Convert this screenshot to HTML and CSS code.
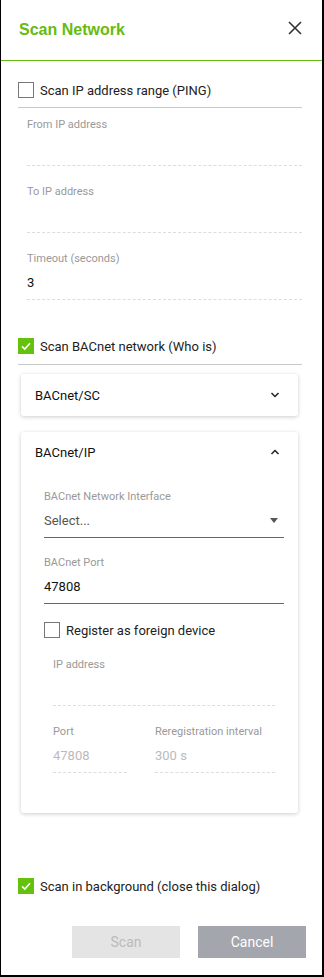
FILE: index.html
```html
<!DOCTYPE html>
<html>
<head>
<meta charset="utf-8">
<link rel="stylesheet" href="styles.css">
</head>
<body>
<div class="dialog">
  <div class="header">
    <div class="title">Scan Network</div>
    <svg class="close" width="14" height="14" viewBox="0 0 14 14"><path d="M1 1L13 13M13 1L1 13" stroke="#333" stroke-width="1.6" fill="none"/></svg>
  </div>
  <div class="body">
    <label class="check-row">
      <span class="box"></span>
      <span class="check-text">Scan IP address range (PING)</span>
    </label>
    <div class="rule"></div>
    <div class="group">
      <div class="field dashed">
        <div class="flabel">From IP address</div>
        <div class="fvalue"></div>
      </div>
      <div class="field dashed">
        <div class="flabel">To IP address</div>
        <div class="fvalue"></div>
      </div>
      <div class="field dashed">
        <div class="flabel">Timeout (seconds)</div>
        <div class="fvalue">3</div>
      </div>
    </div>

    <label class="check-row bac">
      <span class="box checked"><svg width="16" height="16" viewBox="0 0 16 16"><path d="M4 8.3L6.8 11L12 5.2" stroke="#fff" stroke-width="1.6" fill="none"/></svg></span>
      <span class="check-text">Scan BACnet network (Who is)</span>
    </label>
    <div class="rule rule2"></div>

    <div class="card sc">
      <div class="card-head">
        <span>BACnet/SC</span>
        <svg width="10" height="6" viewBox="0 0 10 6"><path d="M1.5 1L5 4.5L8.5 1" stroke="#222" stroke-width="1.5" fill="none"/></svg>
      </div>
    </div>

    <div class="card ip">
      <div class="card-head">
        <span>BACnet/IP</span>
        <svg width="10" height="6" viewBox="0 0 10 6"><path d="M1.5 5L5 1.5L8.5 5" stroke="#222" stroke-width="1.5" fill="none"/></svg>
      </div>
      <div class="card-body">
        <div class="field solid">
          <div class="flabel">BACnet Network Interface</div>
          <div class="fvalue select"><span class="placeholder">Select...</span><span class="caret"></span></div>
        </div>
        <div class="field solid">
          <div class="flabel">BACnet Port</div>
          <div class="fvalue">47808</div>
        </div>
        <label class="check-row foreign">
          <span class="box"></span>
          <span class="check-text">Register as foreign device</span>
        </label>
        <div class="sub">
          <div class="field dashed">
            <div class="flabel">IP address</div>
            <div class="fvalue"></div>
          </div>
          <div class="pair">
            <div class="field dashed port">
              <div class="flabel">Port</div>
              <div class="fvalue disabled">47808</div>
            </div>
            <div class="field dashed interval">
              <div class="flabel">Reregistration interval</div>
              <div class="fvalue disabled">300 s</div>
            </div>
          </div>
        </div>
      </div>
    </div>

    <label class="check-row bg">
      <span class="box checked"><svg width="16" height="16" viewBox="0 0 16 16"><path d="M4 8.3L6.8 11L12 5.2" stroke="#fff" stroke-width="1.6" fill="none"/></svg></span>
      <span class="check-text">Scan in background (close this dialog)</span>
    </label>

    <div class="actions">
      <button class="btn scan">Scan</button>
      <button class="btn cancel">Cancel</button>
    </div>
  </div>
</div>
</body>
</html>
```
FILE: styles.css
```css
* { box-sizing: border-box; }
html, body { margin: 0; padding: 0; background: #fff; }
body {
  font-family: Roboto, "Liberation Sans", Arial, sans-serif;
  color: #222;
  width: 324px;
  height: 977px;
}
.dialog {
  width: 324px;
  height: 977px;
  border-left: 1px solid #000;
  border-right: 2px solid #000;
  border-bottom: 2px solid #000;
  display: flex;
  flex-direction: column;
}
.header {
  height: 61px;
  border-bottom: 1px solid #66bb11;
  display: flex;
  align-items: center;
  justify-content: space-between;
  padding: 0 20px 0 18px;
}
.title {
  font-family: "Liberation Sans", Arial, sans-serif;
  font-weight: bold;
  font-size: 16px;
  color: #66bb11;
  margin-top: -1px;
}
.close { margin-top: -4px; }
.body {
  padding: 15px 20px 0 17px;
  display: flex;
  flex-direction: column;
}
.check-row {
  display: flex;
  align-items: center;
  height: 28px;
  font-size: 13px;
  color: #222;
}
.box {
  width: 16px;
  height: 16px;
  border: 1px solid #777;
  flex: none;
  margin-right: 6px;
  display: flex;
}
.box.checked {
  background: #66c10c;
  border-color: #66c10c;
}
.box.checked svg { margin: -1px; }
.rule {
  height: 1px;
  background: #c8c8c8;
  margin-top: 3px;
}
.rule.rule2 { margin-top: 4px; }
.group { padding: 0 0 0 9px; }
.field { display: flex; flex-direction: column; }
.flabel {
  font-size: 11px;
  line-height: 14px;
  color: #999;
  margin-top: 10px;
}
.group .field + .field .flabel { margin-top: 19px; }
.fvalue {
  height: 34px;
  line-height: 33px;
  font-size: 13px;
  color: #111;
}
.field.dashed .fvalue { border-bottom: 1px dashed #ddd; }
.field.solid .fvalue { border-bottom: 1px solid #666; }
.fvalue.disabled { color: #bbb; }

.check-row.bac { margin-top: 32px; }

.card {
  background: #fff;
  border-radius: 3px;
  box-shadow: 0 1px 4px rgba(0,0,0,0.2);
  margin-left: 3px;
  margin-right: 4px;
}
.card.sc { margin-top: 9px; }
.card.ip { margin-top: 16px; }
.card-head {
  display: flex;
  align-items: center;
  justify-content: space-between;
  padding: 0 18px 0 14px;
  font-size: 13px;
  color: #111;
}
.card.sc .card-head { height: 42px; }
.card.ip .card-head { height: 40px; }
.card-body {
  padding: 8px 14px 40px 23px;
  display: flex;
  flex-direction: column;
}
.card-body .field.solid + .field.solid .flabel { margin-top: 18px; }
.select {
  display: flex;
  align-items: center;
  justify-content: space-between;
}
.placeholder { color: #555; }
.caret {
  width: 0; height: 0;
  border-left: 4.5px solid transparent;
  border-right: 4.5px solid transparent;
  border-top: 5px solid #555;
  margin-right: 6px;
}
.check-row.foreign { margin-top: 12px; }
.sub { padding: 0 9px; }
.sub .field .flabel { margin-top: 14px; }
.pair { display: flex; gap: 28px; }
.pair .field .flabel { margin-top: 19px; }
.port { width: 74px; }
.interval { flex: 1; }

.check-row.bg { margin-top: 59px; }
.actions {
  display: flex;
  justify-content: flex-end;
  gap: 18px;
  margin-top: 26px;
  margin-right: -4px;
}
.btn {
  width: 108px;
  height: 32px;
  border: none;
  font-family: Roboto, "Liberation Sans", Arial, sans-serif;
  font-size: 14px;
  padding: 0;
}
.btn.scan { background: #e4e4e4; color: #bbb; }
.btn.cancel { background: #a3a6ad; color: #fff; }
```
